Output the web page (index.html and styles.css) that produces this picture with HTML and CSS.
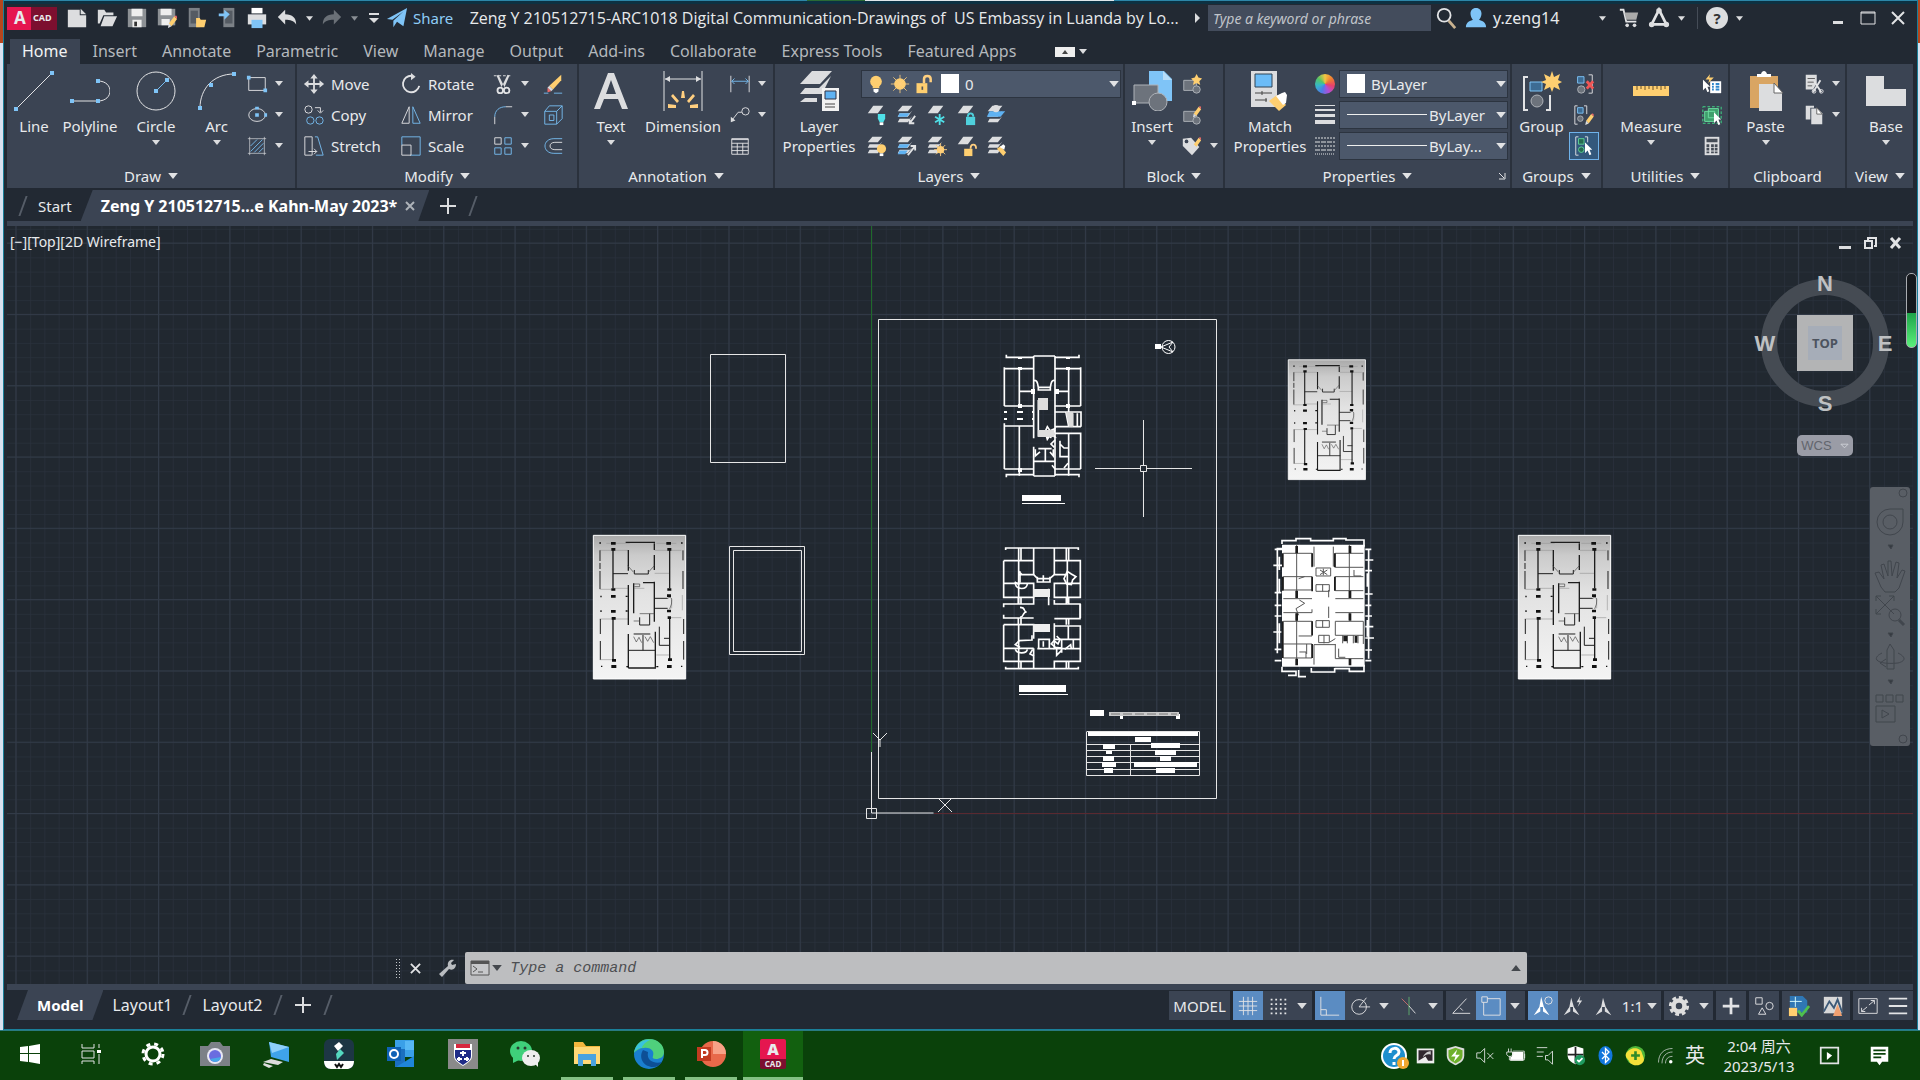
FILE: index.html
```html
<!DOCTYPE html>
<html lang="en">
  <head>
    <meta charset="UTF-8" />
    <meta name="viewport" content="width=device-width, initial-scale=1.0" />
    <title>AutoCAD</title>
    <link rel="stylesheet" href="styles.css">
  </head>
  <body>
    <!-- shared shapes -->
    <svg class="defs" aria-hidden="true">
      <symbol id="caret" viewBox="0 0 8 5"><path d="M0 0h8L4 5z" /></symbol>
      <symbol id="sheets" viewBox="0 0 24 24">
        <path class="solid" d="M8 2h11l-5 6H3zM5 10h11l3-3-5 7H3zM5 16h11l3-3-5 7H3z" />
      </symbol>
      <symbol id="sheet" viewBox="0 0 24 24"><path class="solid" d="M9 2h11l-6 8H3z" /></symbol>
      <symbol id="block" viewBox="0 0 24 24">
        <path class="fade" d="M3 8h14v11H3z" /><circle class="fade" cx="17" cy="18" r="4" />
      </symbol>
      <symbol id="pencil" viewBox="0 0 10 14">
        <path class="amber" d="M7 1l3 3-6 8-3-3z" /><path class="pink" d="M7 1l3 3 0-2-1-2z" /><path class="solid" d="M1 9l3 3-4 2z" />
      </symbol>
      <symbol id="arrowhead" viewBox="0 0 9 14"><path fill="#fff" d="M0 0l8 8H5l2 5-2 1-2-5-3 3z" /></symbol>

      <!-- scanned floor plan -->
      <linearGradient id="scan" x1="0" y1="0" x2="0" y2="1">
        <stop offset="0" stop-color="#a9a9a9" />
        <stop offset=".14" stop-color="#cbcbcb" />
        <stop offset=".4" stop-color="#e2e2e2" />
        <stop offset="1" stop-color="#f4f4f4" />
      </linearGradient>
      <g id="scan-plan">
        <path d="M1 1h277v431H1z" fill="url(#scan)" stroke="#fff" stroke-width="3" />
        <g fill="none" stroke="#9a9a9a" stroke-width="2">
          <path d="M20 46h85M185 46h80M20 163h45M62 160h43M185 115h46M20 252h85M230 248h35M20 374h42M190 360h42M236 190v30M268 180v46M40 25h70M190 25h60M124 160h30" />
        </g>
        <g fill="none" stroke="#1d1d1d" stroke-width="4">
          <path d="M60 45v115M60 252v122M230 45v115M230 252v122M106 45v62M106 150v120M106 297v102M122 145v90M184 25v20M184 60v45M184 140v120M187 290v108" />
          <path d="M98 22h88M150 143h34M106 399h83" />
          <path stroke-width="3" d="M21 46v32M21 84v18M21 108v54M270 46v30M270 108v54M22 252v45M22 318v56M272 252v45M272 318v56" />
          <path stroke-width="3" d="M60 116h45M124 105v12h42v-12M184 190h40M184 220h40M106 346h82M122 297h50M150 300v46M199 275v56h32M231 310h-18M140 247v23h30v-34" />
          <path stroke="#444" stroke-width="2" d="M104 92l18 20M166 112l18-20M224 190q10-8 12 4t-6 28M122 305l8 16 8-14 8 16M156 305l8 14 8-14 10 18M122 147h18v8h-16M122 258h18M140 236h44" />
        </g>
        <g fill="#111">
          <path d="M54 21h14v8H54zM220 21h14v8h-14zM55 39h12v8H55zM223 39h12v8h-12zM55 160h12v7H55zM223 160h12v7h-12zM54 180h14v8H54zM222 178h12v8h-12zM54 225h14v8H54zM222 224h12v8h-12zM56 246h12v8H56zM224 244h10v8h-10zM57 372h12v8H57zM225 370h12v8h-12zM55 390h15v9H55zM222 390h14v9h-14z" />
          <path d="M19 22h5v4h-5zM264 22h5v4h-5zM22 182h4v5h-4zM22 226h4v5h-4zM24 392h4v4h-4zM264 392h4v4h-4zM98 182h6v4h-6zM98 226h6v4h-6zM100 393h6v4h-6zM190 393h6v4h-6z" />
        </g>
      </g>
    </svg>

    <div class="window">
      <header class="titlebar">
        <a class="logo" href="#" aria-label="AutoCAD"><b>A</b><span>CAD</span></a>
        <div class="quick">
          <button type="button" aria-label="New"><svg viewBox="0 0 24 24"><path class="solid" d="M2 3h13v6h7v13H2zM16 2l6 6h-6z" /></svg></button>
          <button type="button" aria-label="Open"><svg viewBox="0 0 24 24"><path class="solid" d="M2 3h7l2 3h8v3H8L4 18H2zM9 10h14l-5 11H5z" /></svg></button>
          <button type="button" aria-label="Save"><svg viewBox="0 0 24 24"><path fill="#8d9195" d="M2 2h20v20H2z" /><path fill="#eee" d="M6 2h12v8H6zM7 14h10v8H7z" /><path fill="#333" d="M9 16h3v5H9z" /></svg></button>
          <button type="button" aria-label="Save As"><svg viewBox="0 0 24 24"><path fill="#8d9195" d="M2 2h19v18H2z" /><path fill="#eee" d="M5 2h12v7H5zM6 13h9v7H6z" /><use href="#pencil" x="13" y="9" width="10" height="14" /></svg></button>
          <button type="button" aria-label="Open from mobile"><svg viewBox="0 0 24 24"><path fill="#7c8187" d="M3 1h12v21H3z" /><path fill="#555b63" d="M5 4h8v14H5z" /><path class="amber" d="M11 12h4l1 2h6l-2 8H11z" /></svg></button>
          <button type="button" aria-label="Save to mobile"><svg viewBox="0 0 24 24"><path fill="#7c8187" d="M8 1h12v21H8z" /><path fill="#555b63" d="M10 4h8v14h-8z" /><path fill="#7fc4f7" d="M3 7h6V3l6 5-6 6v-4H3z" /></svg></button>
          <button type="button" aria-label="Plot"><svg viewBox="0 0 24 24"><path fill="#fff" d="M6 1h12v6H6z" /><path class="solid" d="M2 8h20v11H2z" /><path fill="#7fc4f7" d="M6 14h12v9H6z" /></svg></button>
          <button type="button" aria-label="Undo"><svg viewBox="0 0 24 24"><path class="solid" d="M2 11l8-8v5c8 0 12 4 12 11-3-4-6-5-12-5v5z" /></svg></button>
          <button type="button" class="drop" aria-label="Undo list"><svg><use href="#caret" /></svg></button>
          <button type="button" aria-label="Redo"><svg viewBox="0 0 24 24"><path fill="#6a7077" d="M22 11l-8-8v5C6 8 2 12 2 19c3-4 6-5 12-5v5z" /></svg></button>
          <button type="button" class="drop dim" aria-label="Redo list"><svg><use href="#caret" /></svg></button>
          <button type="button" class="custom" aria-label="Customize"><svg viewBox="0 0 12 12"><path class="solid" d="M1 1h10v2H1zM1 6h10l-5 5z" /></svg></button>
          <button type="button" class="share"><svg viewBox="0 0 24 24"><path fill="#7fc4f7" d="M1 13L23 1l-4 20-7-5-4 6v-7L19 5 7 14z" /></svg>Share</button>
        </div>
        <h1>Zeng Y 210512715-ARC1018 Digital Communication-Drawings of  US Embassy in Luanda by Lo...</h1>
        <div class="account">
          <svg class="play" viewBox="0 0 5 10"><path class="solid" d="M0 0l5 5-5 5z" /></svg>
          <input type="search" placeholder="Type a keyword or phrase" aria-label="Search help" />
          <button type="button" aria-label="Search"><svg viewBox="0 0 24 24"><circle class="line" cx="10" cy="9" r="7" stroke-width="2" /><path d="M15 15l7 8" stroke="#c9b28f" stroke-width="3" /></svg></button>
          <button type="button" class="user"><svg viewBox="0 0 24 24"><path fill="#7fc4f7" d="M12 1c4 0 6 3 6 6s-2 7-3 7c4 1 8 3 8 8H1c0-5 4-7 8-8-1 0-3-4-3-7s2-6 6-6z" /></svg>y.zeng14</button>
          <button type="button" class="drop" aria-label="Account menu"><svg><use href="#caret" /></svg></button>
          <button type="button" aria-label="Cart"><svg viewBox="0 0 24 24"><path class="line" d="M2 3h4l3 13h11" stroke-width="2" /><path fill="#aaa" d="M7 6h15l-2 8H9z" /><circle class="solid" cx="10" cy="20" r="2" /><circle class="solid" cx="18" cy="20" r="2" /></svg></button>
          <button type="button" aria-label="App store"><svg viewBox="0 0 24 24"><path class="line" d="M12 3L4 19h16z" stroke-width="3" /><circle class="solid" cx="12" cy="4" r="3" /><circle class="solid" cx="4" cy="19" r="3" /><circle class="solid" cx="20" cy="19" r="3" /></svg></button>
          <button type="button" class="drop" aria-label="Apps menu"><svg><use href="#caret" /></svg></button>
          <i class="rule"></i>
          <button type="button" class="help" aria-label="Help">?</button>
          <button type="button" class="drop" aria-label="Help menu"><svg><use href="#caret" /></svg></button>
        </div>
        <div class="win-buttons">
          <button type="button" aria-label="Minimize"><svg viewBox="0 0 16 16"><path class="solid" d="M3 11h10v3H3z" /></svg></button>
          <button type="button" aria-label="Maximize"><svg viewBox="0 0 16 16"><path class="line" d="M1 2h14v12H1zM1 3h14" /></svg></button>
          <button type="button" aria-label="Close"><svg viewBox="0 0 16 16"><path class="line" d="M2 2l12 12M14 2L2 14" stroke-width="2" /></svg></button>
        </div>
      </header>

      <nav class="ribbon-tabs">
        <a class="active" href="#">Home</a>
        <a href="#">Insert</a>
        <a href="#">Annotate</a>
        <a href="#">Parametric</a>
        <a href="#">View</a>
        <a href="#">Manage</a>
        <a href="#">Output</a>
        <a href="#">Add-ins</a>
        <a href="#">Collaborate</a>
        <a href="#">Express Tools</a>
        <a href="#">Featured Apps</a>
        <button type="button" class="collapse" aria-label="Minimize ribbon"><svg viewBox="0 0 20 10"><path fill="#eee" d="M0 0h20v10H0z" /><path fill="#444" d="M7 7h6l-3-4z" /></svg></button>
        <button type="button" class="drop" aria-label="Ribbon options"><svg><use href="#caret" /></svg></button>
      </nav>

      <section class="ribbon">
        <div class="panel draw">
          <div class="panel-body">
            <button type="button" class="big"><svg viewBox="0 0 40 40"><path class="line" d="M2 38L38 2" /><path class="grip" d="M0 36h4v4H0zM36 0h4v4h-4z" /></svg>Line</button>
            <button type="button" class="big"><svg viewBox="0 0 40 40"><path class="line" d="M2 30h26c16 0 16-20 0-20" /><path class="grip" d="M0 28h4v4H0zM26 28h4v4h-4zM26 8h4v4h-4z" /></svg>Polyline</button>
            <button type="button" class="big"><svg viewBox="0 0 40 40"><circle class="line" cx="20" cy="20" r="19" /><path class="blue" d="M20 20L31 9" /><path class="grip" d="M18 18h4v4h-4zM29 7h4v4h-4z" /></svg>Circle<svg class="mini"><use href="#caret" /></svg></button>
            <button type="button" class="big"><svg viewBox="0 0 40 40"><path class="line" d="M3 37C3 18 16 3 37 3" /><path class="grip" d="M1 35h4v4H1zM12 12h4v4h-4zM35 1h4v4h-4z" /></svg>Arc<svg class="mini"><use href="#caret" /></svg></button>
            <div class="stack">
              <div class="row"><button type="button" class="small" aria-label="Rectangle"><svg viewBox="0 0 24 24"><path class="line" d="M3 5h18v14H3z" /><path class="grip" d="M1 3h4v4H1zM19 17h4v4h-4z" /></svg></button><button type="button" class="drop" aria-label="More"><svg><use href="#caret" /></svg></button></div>
              <div class="row"><button type="button" class="small" aria-label="Ellipse"><svg viewBox="0 0 24 24"><ellipse class="line" cx="12" cy="12" rx="9" ry="7" /><path class="grip" d="M10 10h4v4h-4zM10 3h4v3h-4zM20 10h3v4h-3z" /></svg></button><button type="button" class="drop" aria-label="More"><svg><use href="#caret" /></svg></button></div>
              <div class="row"><button type="button" class="small" aria-label="Hatch"><svg viewBox="0 0 24 24"><path class="line" d="M2 4h20M2 20h20M4 2v20M20 2v20" stroke-opacity=".7" /><path class="blue" d="M5 12l7-7M5 18L18 5M9 19L19 9M14 19l5-5" /></svg></button><button type="button" class="drop" aria-label="More"><svg><use href="#caret" /></svg></button></div>
            </div>
          </div>
          <button type="button" class="panel-title">Draw<svg><use href="#caret" /></svg></button>
        </div>

        <div class="panel modify">
          <div class="panel-body">
            <div class="stack">
              <button type="button" class="row"><svg viewBox="0 0 24 24"><path class="solid" d="M12 1l4 5h-3v5h5V8l5 4-5 4v-3h-5v5h3l-4 5-4-5h3v-5H6v3l-5-4 5-4v3h5V6H8z" /></svg>Move</button>
              <button type="button" class="row"><svg viewBox="0 0 24 24"><circle class="line" cx="6" cy="6" r="4" /><path class="line" d="M13 4h6v5M16 7l3 3 3-3" /><circle class="blue" cx="8" cy="18" r="4" /><circle class="blue" cx="18" cy="18" r="4" /></svg>Copy</button>
              <button type="button" class="row"><svg viewBox="0 0 24 24"><path class="line" d="M2 2h8v20H2zM6 18h9M12 15l3 3-3 3" /><path class="blue" d="M13 2h3l6 20h-8" /></svg>Stretch</button>
            </div>
            <div class="stack">
              <button type="button" class="row"><svg viewBox="0 0 24 24"><path class="line" d="M13 3a9 9 0 1 0 8 11" stroke-width="2" /><path class="solid" d="M12 0l5 4-5 4z" /></svg>Rotate</button>
              <button type="button" class="row"><svg viewBox="0 0 24 24"><path class="line" d="M10 3v18H2z" /><path class="blue" d="M14 3v18h8z" /></svg>Mirror</button>
              <button type="button" class="row"><svg viewBox="0 0 24 24"><path class="blue" d="M2 11V2h20v20H11" /><path class="line" d="M2 11h10v11H2z" /></svg>Scale</button>
            </div>
            <div class="stack">
              <div class="row"><button type="button" class="small" aria-label="Trim"><svg viewBox="0 0 24 24"><path class="line" d="M2 3h20" stroke-dasharray="3 2" /><path class="solid" d="M5 3l2-1 7 14-3 1zM19 3l-2-1-7 14 3 1z" /><circle class="line" cx="9" cy="19" r="3" stroke-width="2" /><circle class="line" cx="16" cy="19" r="3" stroke-width="2" /></svg></button><button type="button" class="drop" aria-label="More"><svg><use href="#caret" /></svg></button></div>
              <div class="row"><button type="button" class="small" aria-label="Fillet"><svg viewBox="0 0 24 24"><path class="blue" d="M3 14C3 7 8 3 15 3" /><path class="line" d="M3 14v8M15 3h7" /></svg></button><button type="button" class="drop" aria-label="More"><svg><use href="#caret" /></svg></button></div>
              <div class="row"><button type="button" class="small" aria-label="Array"><svg viewBox="0 0 24 24"><path class="line" d="M3 3h7v7H3z" /><path class="blue" d="M14 3h7v7h-7zM3 14h7v7H3zM14 14h7v7h-7z" /></svg></button><button type="button" class="drop" aria-label="More"><svg><use href="#caret" /></svg></button></div>
            </div>
            <div class="stack">
              <div class="row"><button type="button" class="small" aria-label="Erase"><svg viewBox="0 0 24 24"><path class="amber" d="M21 2v6L12 18l-4-4z" /><path class="solid" d="M8 14l4 4-2 2-4-4z" /><path class="pink" d="M6 16l4 4-4 1z" /><path class="blue" d="M2 22h5M13 22h9" /></svg></button></div>
              <div class="row"><button type="button" class="small" aria-label="Explode"><svg viewBox="0 0 24 24"><path class="blue" d="M3 8h13v14H3zM3 8l5-6h14v14l-6 6M16 8l6-6M8 12h5v6H8z" /></svg></button></div>
              <div class="row"><button type="button" class="small" aria-label="Offset"><svg viewBox="0 0 24 24"><path class="blue" d="M22 4h-9c-13 0-13 16 0 16h9" /><path class="line" d="M22 8h-8c-7 0-7 8 0 8h8" /></svg></button></div>
            </div>
          </div>
          <button type="button" class="panel-title">Modify<svg><use href="#caret" /></svg></button>
        </div>

        <div class="panel annotation">
          <div class="panel-body">
            <button type="button" class="big"><svg viewBox="0 0 40 40"><path class="solid" d="M17 2h6l14 36h-6l-4-10H13L9 38H3zM15 23h10L20 9z" fill-rule="evenodd" /></svg>Text<svg class="mini"><use href="#caret" /></svg></button>
            <button type="button" class="big"><svg viewBox="0 0 40 40"><path class="line" d="M1 0v40M39 0v40M2 8h36" /><path class="solid" d="M2 8l5-3v6zM38 8l-5-3v6z" /><path fill="#ffcf80" d="M19 20h2l1 7h-4zM10 23l6 7-2 2-6-7zM30 23l-6 7 2 2 6-7zM5 33l8 1v3H5zM35 33l-8 1v3h8z" /></svg>Dimension</button>
            <div class="stack">
              <div class="row"><button type="button" class="small" aria-label="Linear"><svg viewBox="0 0 24 24"><path class="line" d="M2 3v18M22 3v18" /><path class="blue" d="M3 9h18M6 6L3 9l3 3M18 6l3 3-3 3" /></svg></button><button type="button" class="drop" aria-label="More"><svg><use href="#caret" /></svg></button></div>
              <div class="row"><button type="button" class="small" aria-label="Leader"><svg viewBox="0 0 24 24"><path class="line" d="M3 18l7-9h4" /><circle class="line" cx="18" cy="8" r="4" /><path class="solid" d="M2 20v-6l5 4z" /></svg></button><button type="button" class="drop" aria-label="More"><svg><use href="#caret" /></svg></button></div>
              <div class="row"><button type="button" class="small" aria-label="Table"><svg viewBox="0 0 24 24"><path class="line" d="M3 4h18v17H3zM3 5h18M3 9h18M3 13h18M3 17h18M9 9v12M15 9v12" /></svg></button></div>
            </div>
          </div>
          <button type="button" class="panel-title">Annotation<svg><use href="#caret" /></svg></button>
        </div>

        <div class="panel layers">
          <div class="panel-body">
            <button type="button" class="big"><svg viewBox="0 0 40 40"><path class="solid" d="M13 0h20L21 13H1zM6 17h14l12-12-9 18H1zM6 27h12v4H1z" /><path fill="#f2f2f2" d="M23 17h17v23H23z" /><path fill="#5fb2f2" stroke="#334" d="M26 20h11v8H26z" /><path stroke="#444" d="M26 33h10M26 36h10" /></svg>Layer<br />Properties</button>
            <div class="stack">
              <div class="row"><label class="combo"><svg viewBox="0 0 24 24"><circle class="amber" cx="12" cy="9" r="7" /><path class="amber" d="M8 13h8v4H8z" /><path fill="#fff" d="M9 18h6v3l-3 2-3-2z" /></svg><svg viewBox="0 0 24 24"><circle class="amber" cx="12" cy="12" r="7" /><path stroke="#ffcf80" d="M12 1v22M1 12h22M4 4l16 16M20 4L4 20" /></svg><svg viewBox="0 0 24 24"><path class="amber" d="M3 11h13v12H3z" /><path d="M12 11V6c0-5 8-5 8 0v4" fill="none" stroke="#ffcf80" stroke-width="3" /><path fill="#555" d="M9 15h2v4H9z" /></svg><i class="swatch"></i><select aria-label="Layer"><option>0</option></select><svg class="caret"><use href="#caret" /></svg></label></div>
              <div class="row">
                <button type="button" class="small" aria-label="Layer off"><svg viewBox="0 0 24 24"><use href="#sheet" /><path fill="#4fe0e8" d="M14 11h8v5l-2 4h-4l-2-4z" /><path fill="#fff" d="M16 20h4v3h-4z" /></svg></button>
                <button type="button" class="small" aria-label="Layer isolate"><svg viewBox="0 0 24 24"><use href="#sheets" /><path fill="#5fb2f2" d="M5 10h11l-3 4H3z" /><path class="line" d="M22 13l-6 8M16 17v4h5" stroke-width="2" /></svg></button>
                <button type="button" class="small" aria-label="Layer freeze"><svg viewBox="0 0 24 24"><use href="#sheet" /><path d="M16 11v12M11 14l10 6M21 14l-10 6" stroke="#4fe0e8" stroke-width="2" /></svg></button>
                <button type="button" class="small" aria-label="Layer lock"><svg viewBox="0 0 24 24"><use href="#sheet" /><path fill="#4fd0dc" d="M12 14h10v9H12z" /><path d="M14 14c0-5 6-5 6 0" fill="none" stroke="#4fd0dc" stroke-width="2" /></svg></button>
                <button type="button" class="small" aria-label="Make current"><svg viewBox="0 0 24 24"><use href="#sheets" /><path fill="#5fb2f2" d="M5 8h17l-5 6H2z" /><circle class="solid" cx="12" cy="5" r="4" /></svg></button>
              </div>
              <div class="row">
                <button type="button" class="small" aria-label="Turn all on"><svg viewBox="0 0 24 24"><use href="#sheets" /><circle class="amber" cx="18" cy="15" r="5" /><path fill="#fff" d="M16 20h4v3h-4z" /></svg></button>
                <button type="button" class="small" aria-label="Unisolate"><svg viewBox="0 0 24 24"><use href="#sheets" /><path fill="#5fb2f2" d="M5 10h11l-3 4H3zM5 17h9l-3 4H3z" /><path class="line" d="M14 22l8-10M17 12h5v5" stroke-width="2" /></svg></button>
                <button type="button" class="small" aria-label="Thaw all"><svg viewBox="0 0 24 24"><use href="#sheets" /><circle class="amber" cx="17" cy="16" r="4" /><path stroke="#ffcf80" d="M17 9v14M10 16h14M12 11l10 10M22 11L12 21" /></svg></button>
                <button type="button" class="small" aria-label="Unlock"><svg viewBox="0 0 24 24"><use href="#sheet" /><path class="amber" d="M10 15h9v8h-9z" /><path d="M17 15c0-6 6-6 6 0" fill="none" stroke="#ffcf80" stroke-width="2" /></svg></button>
                <button type="button" class="small" aria-label="Match layer"><svg viewBox="0 0 24 24"><use href="#sheets" /><path class="amber" d="M13 15l4-3 6 7-3 4z" /><path fill="#fff" d="M16 13l4-3 2 2-1 4z" /></svg></button>
              </div>
            </div>
          </div>
          <button type="button" class="panel-title">Layers<svg><use href="#caret" /></svg></button>
        </div>

        <div class="panel insert">
          <div class="panel-body">
            <button type="button" class="big"><svg viewBox="0 0 40 40"><path fill="#7fc4f7" d="M17 0h15l8 8v22H17z" /><path fill="#b8defa" d="M31 0v9h9z" /><path class="fade" d="M2 14h24v18H2z" /><circle class="fade" cx="26" cy="31" r="9" /><path fill="#fff" d="M0 30h4v4H0z" /></svg>Insert<svg class="mini"><use href="#caret" /></svg></button>
            <div class="stack">
              <div class="row"><button type="button" class="small" aria-label="Create block"><svg viewBox="0 0 24 24"><use href="#block" /><path class="amber" d="M17 1l2 4 4 1-3 3 1 4-4-2-4 2 1-4-3-3 4-1z" /></svg></button></div>
              <div class="row"><button type="button" class="small" aria-label="Edit block"><svg viewBox="0 0 24 24"><use href="#block" /><use href="#pencil" x="13" y="2" width="9" height="13" /></svg></button></div>
              <div class="row"><button type="button" class="small" aria-label="Edit attributes"><svg viewBox="0 0 24 24"><path class="solid" d="M2 4l9-1 9 10-8 9L2 12z" /><circle fill="#3b4453" cx="6" cy="7" r="2" /><use href="#pencil" x="13" y="2" width="9" height="13" /></svg></button><button type="button" class="drop" aria-label="More"><svg><use href="#caret" /></svg></button></div>
            </div>
          </div>
          <button type="button" class="panel-title">Block<svg><use href="#caret" /></svg></button>
        </div>

        <div class="panel properties">
          <div class="panel-body">
            <button type="button" class="big"><svg viewBox="0 0 40 40"><path class="solid" d="M1 0h26v36H1z" /><path fill="#6bbcf7" stroke="#345" d="M5 3h17v13H5z" /><path stroke="#444" d="M5 22h17M5 29h12M12 20v4M16 27v4" /><path class="amber" d="M19 30l8-6 9 10-7 6z" /><path fill="#fff" d="M26 25l6-3 3-1 2 3-1 8-3 2z" /></svg>Match<br />Properties</button>
            <div class="stack">
              <div class="row"><i class="wheel"></i><label class="combo"><i class="swatch"></i><select aria-label="Color"><option>ByLayer</option></select><svg class="caret"><use href="#caret" /></svg></label></div>
              <div class="row"><svg class="weights" viewBox="0 0 20 20"><path class="solid" d="M0 0h20v1H0zM0 4h20v2H0zM0 9h20v3H0zM0 15h20v4H0z" /></svg><label class="combo"><i class="sample"></i><select aria-label="Lineweight"><option>ByLayer</option></select><svg class="caret"><use href="#caret" /></svg></label></div>
              <div class="row"><svg class="weights" viewBox="0 0 20 20"><path class="line" d="M0 2h20M0 10h20" stroke-dasharray="2 1" /><path class="line" d="M0 6h20M0 14h20" stroke-dasharray="5 1" /><path class="line" d="M0 18h20" stroke-dasharray="1 1" /></svg><label class="combo"><i class="sample"></i><select aria-label="Linetype"><option>ByLay...</option></select><svg class="caret"><use href="#caret" /></svg></label></div>
            </div>
          </div>
          <button type="button" class="panel-title">Properties<svg><use href="#caret" /></svg></button>
          <button type="button" class="launcher" aria-label="Properties palette"><svg viewBox="0 0 8 8"><path class="line" d="M1 1l5 5M7 1v6H1" /></svg></button>
        </div>

        <div class="panel groups">
          <div class="panel-body">
            <button type="button" class="big"><svg viewBox="0 0 40 40"><path class="line" d="M6 6H2v33h4M24 39h4V24" stroke-width="2" /><path fill="#3d6c94" stroke="#7fc4f7" d="M8 11h12v9H8z" /><circle class="fade" cx="15" cy="30" r="6" /><path class="amber" d="M30 0l2 6 6-3-2 6 4 2-4 2 2 6-6-3-2 5-2-5-6 3 2-6-5-2 5-2-2-6 6 3z" /></svg>Group</button>
            <div class="stack">
              <div class="row"><button type="button" class="small" aria-label="Ungroup"><svg viewBox="0 0 24 24"><path class="line" d="M17 2h4v20h-4" /><path fill="#3d6c94" stroke="#7fc4f7" d="M5 4h7v7H5z" /><circle class="fade" cx="9" cy="18" r="4" /><path d="M15 9l7 8M22 9l-7 8" stroke="#f05656" stroke-width="3" /></svg></button></div>
              <div class="row"><button type="button" class="small" aria-label="Group edit"><svg viewBox="0 0 24 24"><path class="line" d="M5 2H2v20h3M12 2h3v9" /><path fill="#3d6c94" stroke="#7fc4f7" d="M5 4h6v6H5z" /><circle class="fade" cx="8" cy="16" r="3" /><use href="#pencil" x="13" y="10" width="10" height="13" /></svg></button></div>
              <div class="row"><button type="button" class="small on" aria-label="Group selection"><svg viewBox="0 0 24 24"><path class="line" d="M6 2H3v20h3M13 2h3v6" /><path fill="#276a50" stroke="#5fd39a" d="M6 4h6v6H6z" /><circle cx="9" cy="16" r="3" fill="#276a50" stroke="#5fd39a" /><use href="#arrowhead" x="13" y="8" width="9" height="14" /></svg></button></div>
            </div>
          </div>
          <button type="button" class="panel-title">Groups<svg><use href="#caret" /></svg></button>
        </div>

        <div class="panel utilities">
          <div class="panel-body">
            <button type="button" class="big"><svg viewBox="0 0 40 40"><path class="amber" d="M2 15h36v10H2z" /><path stroke="#6b5328" d="M6 15v4M10 15v3M14 15v4M18 15v3M22 15v4M26 15v3M30 15v4M34 15v3" /></svg>Measure<svg class="mini"><use href="#caret" /></svg></button>
            <div class="stack">
              <div class="row"><button type="button" class="small" aria-label="Quick select"><svg viewBox="0 0 24 24"><path fill="#fff" d="M10 9h12v13H10z" /><path stroke="#2f86cc" d="M12 12h2M16 12h4M12 15h2M16 15h4M12 18h2M16 18h4" stroke-width="2" /><path class="amber" d="M10 1l-5 6h4l-1 4 6-6H9z" /><use href="#arrowhead" x="2" y="7" width="9" height="14" /></svg></button></div>
              <div class="row"><button type="button" class="small" aria-label="Select all"><svg viewBox="0 0 24 24"><path d="M2 3h20v18H2z" fill="none" stroke="#3fe08a" stroke-dasharray="3 2" /><path fill="#3f9f6c" stroke="#6fe0a4" d="M4 8h11v11H4zM8 5h11v10H8z" /><use href="#arrowhead" x="14" y="9" width="9" height="14" /></svg></button></div>
              <div class="row"><button type="button" class="small" aria-label="Calculator"><svg viewBox="0 0 24 24"><path class="solid" d="M4 2h16v20H4z" /><path fill="#454c56" d="M6 4h12v4H6zM6 10h3v3H6zM11 10h3v3h-3zM15 10h3v3h-3zM6 14h3v3H6zM11 14h3v3h-3zM15 14h3v3h-3zM6 18h3v2H6zM11 18h3v2h-3zM15 18h3v2h-3z" /></svg></button></div>
            </div>
          </div>
          <button type="button" class="panel-title">Utilities<svg><use href="#caret" /></svg></button>
        </div>

        <div class="panel clipboard">
          <div class="panel-body">
            <button type="button" class="big"><svg viewBox="0 0 40 40"><path fill="#d9a563" d="M4 5h28v32H4z" /><path fill="#fff" d="M11 6V3h4c1-4 5-4 6 0h4v3z" /><path class="solid" d="M13 13h15l8 8v19H13z" /><path fill="#fff" stroke="#666" d="M28 12v10h9z" /></svg>Paste<svg class="mini"><use href="#caret" /></svg></button>
            <div class="stack">
              <div class="row"><button type="button" class="small" aria-label="Cut"><svg viewBox="0 0 24 24"><path class="solid" d="M3 2h12v9l-4 7H3z" /><path stroke="#555" d="M5 6h8M5 10h7M5 14h5" /><path class="line" d="M19 8l-8 13M12 9l8 12" stroke-width="2" /><circle class="line" cx="12" cy="20" r="2" /><circle class="line" cx="20" cy="20" r="2" /></svg></button><button type="button" class="drop" aria-label="More"><svg><use href="#caret" /></svg></button></div>
              <div class="row"><button type="button" class="small" aria-label="Copy clip"><svg viewBox="0 0 24 24"><path class="solid" d="M3 2h9v2H8v13H3z" /><path class="solid" d="M9 5h7l5 5v12H9z" /><path fill="#fff" stroke="#666" d="M15 4v7h6z" /></svg></button><button type="button" class="drop" aria-label="More"><svg><use href="#caret" /></svg></button></div>
            </div>
          </div>
          <button type="button" class="panel-title">Clipboard</button>
        </div>

        <div class="panel view">
          <div class="panel-body">
            <button type="button" class="big"><svg viewBox="0 0 40 40"><path class="solid" d="M0 5h18v13h22v17H0z" /></svg>Base<svg class="mini"><use href="#caret" /></svg></button>
          </div>
          <button type="button" class="panel-title">View<svg><use href="#caret" /></svg></button>
        </div>
      </section>

      <nav class="file-tabs">
        <i class="slash"></i>
        <a href="#">Start</a>
        <a class="active" href="#">Zeng Y 210512715...e Kahn-May 2023*<svg viewBox="0 0 10 10"><path d="M1 1l8 8M9 1L1 9" stroke="#aeb3b9" stroke-width="2" /></svg></a>
        <button type="button" class="plus" aria-label="New drawing"></button>
        <i class="slash"></i>
      </nav>

      <main class="model">
        <svg class="drawing" viewBox="7 226 1906 758" preserveAspectRatio="xMidYMid slice" role="img" aria-label="Drawing">
          <defs>
            <pattern id="minor" x="871.5" y="813.5" width="14.26" height="14.26" patternUnits="userSpaceOnUse"><path d="M0 0h14.26M0 0v14.26" stroke="#29313c" stroke-width="1.4" /></pattern>
            <pattern id="major" x="871" y="813" width="71.3" height="71.3" patternUnits="userSpaceOnUse"><path d="M.5 0v71.3M0 .5h71.3" stroke="#323b48" /></pattern>
          </defs>
          <path fill="url(#minor)" d="M7 226h1906v758H7z" />
          <path fill="url(#major)" d="M7 226h1906v758H7z" />
          <path stroke="#1f6a2b" d="M871.500 226v526" />
          <path stroke="#5a2930" d="M934 813.500h979" />

          <g fill="none" stroke="#e6e6e6">
            <path d="M878.500 319.500h338v479h-338z" />
            <path d="M710.500 354.500h75v108h-75zM729.500 546.500h75v108h-75zM733.500 550.500h68v101h-68z" />
            <path d="M871.500 752v61h62M866.500 808.500h10v10h-10z" />
            <path d="M873 733l7 7 7-7M880 740v7M938 798l14 14M952 798l-14 14" />
            <path d="M1143.500 420v45M1143.500 472v45M1095 468.500h45M1147 468.500h45M1140.500 465.500h6v6h-6z" />
          </g>

          <!-- north mark -->
          <path fill="#fff" d="M1155 344h6v5h-6z" />
          <g fill="none" stroke="#fff">
            <circle cx="1168.500" cy="347" r="6.500" />
            <path d="M1161 347l12-5-4 5 4 5z" />
          </g>

          <!-- ground floor -->
          <g transform="translate(960 320) scale(.3333)" fill="none" stroke="#fff" stroke-width="5">
            <path d="M139 104v8h82M221 108h64M285 112h72v-8M139 472v-8h82M221 468h64M285 464h72v8" />
            <path d="M221 108v247M285 108v360M221 380v88M133 142v116M178 146v112M133 146h88M133 258h88M178 214h43M133 318h88M133 310v137M178 318v129M133 447h88M178 447v20" />
            <path d="M285 146h77M362 142v116M326 146v112M285 258h77M285 214h41M326 258v18M285 276h78v44M285 320h78M318 278l8 40M338 280v38M352 280v38M285 340h77v107M326 340v107M285 447h77M326 447v20" />
            <path d="M221 182c8-4 12 4 14 20v8h36v-8c2-16 6-24 14-20M235 202h36M235 240v110M221 424h64M235 386h40M256 386v38M300 362v48h24M300 372l12 12h12" />
            <path d="M226 388v20l14-12M270 396l10 12v-20M285 360l-12 12 10 10M324 430l-12 14M276 436l10 12M262 320l8 12 14-6-8 14 8 10-14-4-8 12-4-14-14-2 12-8zM285 330l-14 24" />
          </g>
          <path fill="#fff" d="M1004 411h3v2h-3zM1004 418h3v2h-3zM1017 411h6v2h-6zM1017 418h6v2h-6zM1032 411h2v2h-2zM1032 418h2v2h-2zM1031 389h4v5h-4zM1055 389h4v5h-4zM1018 357h4v2h-4zM1066 357h4v2h-4zM1018 367h4v3h-4zM1066 367h4v3h-4zM1018 404h4v4h-4zM1066 404h4v4h-4zM1018 468h4v4h-4z" />
          <path fill="#ddd" d="M1038 398h10v12h-10zM1038 430h16v7h-16zM1066 412h7v15h-4z" />
          <path fill="#fff" d="M1022 495h39v6h-39zM1022 503h43v1h-43z" />

          <!-- first floor -->
          <g transform="translate(960 520) scale(.3333)" fill="none" stroke="#fff" stroke-width="5">
            <path d="M137 90v-6h218v6M137 440v6h218v-6M131 122h90M131 122v110h90v-42h-90M176 84v38M183 84v38M176 122v130M221 84v80M283 84v80M319 84v38M326 84v38M322 122v128M283 122h78v110h-78v-42h78" />
            <path d="M131 262v-10h90v-20M131 284v10h90M283 240v12h77v44h-77M361 252v42M175 232v20M183 232v20M319 232v20M326 232v20M175 294v20M183 294v20M319 294v20M326 294v20" />
            <path d="M131 314h90v42M131 314v110h90v20M176 314v110M131 385h90M221 385v60M283 310v76h78M283 318h78v106h-78v22M283 358h78M305 358v40M325 318v40M340 358v28M176 424v22M183 424v22M319 424v22M326 424v22" />
            <path d="M176 164h45l12 12h36l14-12h38M232 170v16h38v-16M250 166v20M266 206v50M232 386h51M236 384v-26h32v26M250 364v16M180 154v34M164 186l14 8M166 192c4 18 34 18 36 0M186 164l-10-10M322 154l12 8 14 8-10 10-4 14-14-2-8-16zM180 262c20 0 8 14 20 14-14 0-6 14-20 16M216 346v14l-38 2-12 12 14 8M166 388c4 14 34 14 36 0M218 388l-8 14 12 6M290 348l10 10-6 14-12-10-8 10 12 10 20 2M290 386v20l14-14M314 388l18-14 2 12" />
          </g>
          <path fill="#eee" d="M1033 589h17v8h-17zM1033 624h17v8h-17z" />
          <path fill="#fff" d="M1019 685h47v7h-47zM1019 694h49v1h-49z" />

          <!-- scale bar and title block -->
          <path fill="#fff" d="M1090 710h14v6h-14zM1120 714h3v5h-3zM1176 714h4v5h-4z" />
          <path d="M1109 714h70" stroke="#c9c9c9" stroke-width="4" />
          <path d="M1111 714h66" stroke="#777" stroke-dasharray="9 3" />
          <path fill="none" stroke="#e6e6e6" d="M1087 731.500h112.500v44h-113v-44M1087 744.500h112M1087 750.500h112M1087 756.500h112M1087 762.500h112M1087 769.500h112M1130.500 744v31" />
          <path fill="#fff" d="M1088 732h110v4h-110zM1135 737h16v5h-16zM1103 744h12v5h-12zM1106 751h6v3h-6zM1103 756h11v5h-11zM1102 762h14v5h-14zM1104 768h9v5h-9zM1151 743h29v5h-29zM1155 750h21v5h-21zM1160 756h11v5h-11zM1134 762h63v5h-63zM1156 768h19v5h-19z" />

          <!-- traced plan with dimensions -->
          <g transform="translate(1260 340) scale(.3333)">
            <path fill="#fff" d="M66 614h248v366H66z" />
            <path fill="none" stroke="#fff" stroke-width="5" d="M66 612v-10h42v-6h44v6l20 0h48v-6h38v4h54v20M52 650v-24h14M66 980v14h42v12h-24M154 984v12h70v-12M224 986h44v8h44v-20M52 650v290M326 626v330M40 876h24M40 676h26M44 628h22M44 758h20M44 796h20M44 828h20M44 928h20M44 962h20M316 628h18M316 660h24M316 692h20M316 762h22M316 796h18M316 828h20M316 860h24M316 894h26M316 930h20M316 962h18M58 650v40M58 716v40M58 850v60M322 700v40M322 840v50M116 990v20h22" />
            <g fill="none" stroke="#555" stroke-width="3">
              <path d="M70 640h86v42M156 710H70v40h86v-40M110 615v160M70 776h86M70 818h86v-10M110 820v155M70 844h86v44h-40M70 912h86v42H70M226 640h84M226 640v42h84M226 710h84M226 710v42h84M268 615v160M226 776h84M226 818h84M268 820v20M226 844h84v68M226 844v42h84M226 912v44h84M162 620v60M220 620v60M168 684h44v24h-44zM168 734h40v20h-40zM168 842h40v20h-40zM176 886h32v22h-32zM162 914h64M162 914v60M206 750v22M206 800v34M190 686v20M180 690l22 14M202 690l-22 14M188 734v20M188 842v20M192 886v24" />
              <path d="M116 716l18-6M116 826l-8-20 26-16-16-10M282 690v18h22M140 912v30M248 886v24M262 886v24M280 886v24M294 886v24M236 926v26h20M118 936h20v18M226 896l-16 10" />
            </g>
            <path fill="#1c1c1c" d="M106 618h8v22h-8zM266 618h8v22h-8zM106 752h8v22h-8zM266 752h8v22h-8zM106 820h8v22h-8zM266 820h8v22h-8zM106 956h8v20h-8zM266 956h8v20h-8zM222 640h5v42h-5zM222 710h5v42h-5zM154 640h5v40h-5zM154 710h5v44h-5zM250 888h12v16h-12zM284 888h8v20h-8zM154 844h5v42h-5zM154 912h5v42h-5zM66 640h5v42h-5zM66 710h5v42h-5zM66 844h5v110h-5z" />
          </g>

          <use href="#scan-plan" transform="translate(593 535) scale(.3333)" />
          <use href="#scan-plan" transform="translate(1518 535) scale(.3333)" />
          <use href="#scan-plan" transform="translate(1288 359.500) scale(.2785 .278)" />
        </svg>

        <p class="view-label">[−][Top][2D Wireframe]</p>
        <div class="view-buttons">
          <button type="button" aria-label="Minimize view"><svg viewBox="0 0 14 14"><path class="solid" d="M1 10h12v3H1z" /></svg></button>
          <button type="button" aria-label="Restore view"><svg viewBox="0 0 14 14"><path class="line" d="M5 4V2h8v8h-2M2 5h7v7H2z" stroke-width="2" /></svg></button>
          <button type="button" aria-label="Close view"><svg viewBox="0 0 14 14"><path class="line" d="M3 2l9 10M12 2L3 12" stroke-width="3" /></svg></button>
        </div>

        <div class="compass">
          <span class="n">N</span><span class="w">W</span><button type="button">TOP</button><span class="e">E</span><span class="s">S</span>
        </div>
        <button type="button" class="wcs">WCS<svg viewBox="0 0 10 6"><path d="M1 1h8L5 5z" fill="none" stroke="#d0d2d8" /></svg></button>
        <i class="meter"></i>

        <div class="navbar">
          <svg viewBox="0 0 40 259">
            <circle cx="33" cy="6" r="4" /><circle cx="33" cy="252" r="4" />
            <circle cx="20" cy="35" r="7" /><path d="M33 35a13 13 0 1 1-13-13h13z" />
            <path d="M11 100l-6-14 4-1 5 7-3-14 3-1 4 12V74h3l1 15 4-14 3 1-2 15 5-8 3 1-6 17-4 4H15z" />
            <path d="M6 109l18 18M24 109L6 127M6 114v-5h5M19 109h5v5M6 122v5h5" /><circle cx="25" cy="128" r="6" /><path d="M29 133l5 5" stroke-width="3" />
            <path d="M17 182v-19l3-6 4 6v19z" /><path d="M12 166C0 172 8 178 28 176c8-2 8-6 0-10M10 176l6-4M10 176l6 4" />
            <path d="M6 208h7v7H6zM16 208h7v7h-7zM26 208h7v7h-7zM6 219h19v16H6zM12 223v8l7-4z" />
            <path class="tip" d="M18 58h5l-2 4zM18 146h5l-2 4zM18 193h5l-2 4z" />
          </svg>
        </div>

        <form class="command">
          <i class="grip-dots"></i>
          <button type="button" aria-label="Close command line"><svg viewBox="0 0 12 12"><path class="line" d="M1 1l10 10M11 1L1 11" stroke-width="2" /></svg></button>
          <button type="button" class="wrench" aria-label="Customize"><svg viewBox="0 0 20 20"><path fill="#b9bcc0" d="M2 16L11 8c-1-4 2-7 6-6l-3 3 1 2 4-1c0 4-3 7-7 5L5 19z" /></svg></button>
          <label class="command-box">
            <svg viewBox="0 0 20 16"><path fill="#c7c8ca" stroke="#555" d="M1 1h18v14H1z" /><path fill="#555" d="M1 1h18v3H1z" /><path fill="none" stroke="#555" d="M3 6l4 3-4 3M8 12h5" /></svg>
            <svg class="caret"><use href="#caret" /></svg>
            <input type="text" placeholder="Type a command" aria-label="Command" />
            <svg class="caret up"><use href="#caret" /></svg>
          </label>
        </form>
      </main>

      <footer class="statusbar">
        <nav class="layout-tabs">
          <a class="active" href="#">Model</a>
          <a href="#">Layout1</a>
          <i class="slash"></i>
          <a href="#">Layout2</a>
          <i class="slash"></i>
          <button type="button" class="plus" aria-label="New layout"></button>
          <i class="slash"></i>
        </nav>
        <div class="status">
          <div class="set"><button type="button" class="text">MODEL</button></div>
          <div class="set">
            <button type="button" class="on" aria-label="Grid"><svg viewBox="0 0 24 24"><path class="line" d="M7 2v20M12 2v20M17 2v20M2 7h20M2 12h20M2 17h20" /></svg></button>
            <button type="button" aria-label="Snap"><svg viewBox="0 0 24 24"><path class="line" d="M4 5h17M4 10h17M4 15h17M4 20h17" stroke-width="2" stroke-dasharray="2 3" /></svg></button>
            <button type="button" class="drop" aria-label="Snap menu"><svg><use href="#caret" /></svg></button>
          </div>
          <div class="set">
            <button type="button" class="on" aria-label="Ortho"><svg viewBox="0 0 24 24"><path class="line" d="M2 2v20h20M2 16h6v6" /></svg></button>
            <button type="button" aria-label="Polar"><svg viewBox="0 0 24 24"><circle class="line" cx="11" cy="13" r="8" /><path class="line" d="M11 13h12M11 13l8-10" /></svg></button>
            <button type="button" class="drop" aria-label="Polar menu"><svg><use href="#caret" /></svg></button>
            <button type="button" aria-label="Isodraft"><svg viewBox="0 0 24 24"><path stroke="#c96f6f" d="M4 4l8 8" /><path stroke="#5fae6f" d="M12 2v20" /><path class="line" d="M12 12l7 8" /></svg></button>
            <button type="button" class="drop" aria-label="Isodraft menu"><svg><use href="#caret" /></svg></button>
          </div>
          <div class="set">
            <button type="button" aria-label="Object tracking"><svg viewBox="0 0 24 24"><path class="line" d="M3 20h19M3 20L18 4M11 14l3 3" /></svg></button>
            <button type="button" class="on" aria-label="Object snap"><svg viewBox="0 0 24 24"><path class="line" d="M8 4h14v18H4V8M2 2h6v6H2z" /></svg></button>
            <button type="button" class="drop" aria-label="Snap settings"><svg><use href="#caret" /></svg></button>
          </div>
          <div class="set">
            <button type="button" class="on" aria-label="Annotation visibility"><svg viewBox="0 0 24 24"><path fill="#fff" d="M10 2l3 11 6 9-7-4v-5h-3v5l-7 4 6-9z" /><circle class="line" cx="18" cy="6" r="4" /></svg></button>
            <button type="button" aria-label="Auto scale"><svg viewBox="0 0 24 24"><path class="solid" d="M10 3l3 10 6 9-7-4v-5h-3v5l-7 4 6-9zM20 1l-4 7h3l-2 5 5-7h-3z" /></svg></button>
            <button type="button" aria-label="Annotation scale"><svg viewBox="0 0 24 24"><path class="solid" d="M12 3l3 10 6 9-7-4v-5h-3v5l-7 4 6-9z" /></svg></button>
            <button type="button" class="text scale">1:1<svg><use href="#caret" /></svg></button>
          </div>
          <div class="set">
            <button type="button" aria-label="Workspace"><svg viewBox="0 0 24 24"><circle cx="12" cy="12" r="6" fill="none" stroke="#ddd" stroke-width="5" /><circle cx="12" cy="12" r="9" fill="none" stroke="#ddd" stroke-width="4" stroke-dasharray="4 3" /></svg></button>
            <button type="button" class="drop" aria-label="Workspace menu"><svg><use href="#caret" /></svg></button>
          </div>
          <div class="set"><button type="button" aria-label="Monitor"><svg viewBox="0 0 24 24"><path class="line" d="M12 3v18M3 12h18" stroke-width="3" /></svg></button></div>
          <div class="set"><button type="button" aria-label="Isolate objects"><svg viewBox="0 0 24 24"><path class="line" d="M3 3h7v7H3zM6 21h8l-4-7z" /><circle class="line" cx="18" cy="12" r="4" /></svg></button></div>
          <div class="set wide">
            <button type="button" aria-label="Hardware acceleration"><svg viewBox="0 0 24 24"><path fill="#2f77b5" d="M2 1h14l5 5v13H2z" /><path stroke="#dff" d="M8 2v11M2 7h13" /><path class="amber" d="M1 14h9v9H1z" /><path d="M11 17l4 5 8-10" fill="none" stroke="#4fc04f" stroke-width="3" /></svg></button>
            <button type="button" aria-label="Clean screen"><svg viewBox="0 0 24 24"><path fill="#d8d8d8" d="M2 2h20v18H2z" /><path fill="none" stroke="#3d5a78" d="M2 18l6-11 5 7 4-9 5 14" stroke-width="2" /><path fill="#f0a070" d="M17 10l5 13H12z" /></svg></button>
          </div>
          <div class="set">
            <button type="button" aria-label="Full screen"><svg viewBox="0 0 24 24"><path class="line" d="M2 4h20v16H2zM13 11l6-5M15 6h4v4M11 13l-6 5M5 14v4h4" /></svg></button>
            <button type="button" aria-label="Customization"><svg viewBox="0 0 24 24"><path class="line" d="M2 4h20M2 12h20M2 20h20" stroke-width="2" /></svg></button>
          </div>
        </div>
      </footer>
    </div>

    <div class="taskbar">
      <button type="button" aria-label="Windows start"><svg viewBox="0 0 24 24"><path fill="#fff" d="M2 5l8-1v7H2zM11 4l11-2v9H11zM2 12h8v8l-8-1zM11 12h11v10l-11-2z" /></svg></button>
      <button type="button" aria-label="Task view"><svg viewBox="0 0 24 24"><path class="line" d="M3 2v4h12V2M3 9h12v7H3zM3 22v-3h12v3M20 2v4M20 12v10" /><path fill="#fff" d="M18 8h4v3h-4z" /></svg></button>
      <button type="button" aria-label="Settings"><svg viewBox="0 0 24 24"><circle cx="12" cy="12" r="7" fill="none" stroke="#fff" stroke-width="3" /><circle cx="12" cy="12" r="10" fill="none" stroke="#fff" stroke-width="3" stroke-dasharray="4 4" /></svg></button>
      <button type="button" aria-label="Camera"><svg viewBox="0 0 30 30"><path fill="#7c8187" d="M0 7h8l3-4h9l3 4h7v20H0z" /><circle cx="15" cy="17" r="8" fill="#e8e8f4" /><circle cx="15" cy="17" r="6" fill="#6a6ce0" /><path fill="#49a7e8" d="M10 20a6 6 0 0 0 11-2z" /></svg></button>
      <button type="button" aria-label="Remote desktop"><svg viewBox="0 0 30 30"><path fill="#3fa3ea" d="M7 3l20 5v15L9 18z" /><path fill="#8fd0fa" d="M7 3l20 5-17 6z" /><path fill="#ddd" d="M9 20l12 3-5 3-15-3zM2 24l9 3-4 2-6-3z" /></svg></button>
      <button type="button" aria-label="Filmora"><svg viewBox="0 0 30 30"><rect width="30" height="30" rx="6" fill="#1d3644" /><path fill="#fff" d="M0 22h30c0 6-4 8-7 8H7c-4 0-7-3-7-8zM15 3l4 4-5 5-4-5z" /><path fill="#54d9c0" d="M16 10l4 4-7 7-1-6z" /><path d="M11 25l2 3 2-3 2 3 2-3" fill="none" stroke="#111" stroke-width="2" /></svg></button>
      <button type="button" aria-label="Outlook"><svg viewBox="0 0 30 30"><path fill="#3aa0e8" d="M9 1h19v17H9z" /><path fill="#1b6fc0" d="M9 10h10v18H9z" /><path fill="#57b8f5" d="M19 2h9v9h-9z" /><path fill="#1f86da" d="M10 28l18-11v11z" /><path fill="#0f62b5" d="M1 8h14v14H1z" /><circle cx="8" cy="15" r="4" fill="none" stroke="#fff" stroke-width="2" /></svg></button>
      <button type="button" aria-label="University"><svg viewBox="0 0 30 30"><path fill="#8a8a8a" d="M0 0h30v30H0z" /><path fill="#fff" d="M6 5h18v12c0 5-5 7-9 10-4-3-9-5-9-10z" /><path fill="#d7263d" d="M8 5h14v4H8z" /><path fill="#1f2b87" d="M7 11h16v6c0 4-4 6-8 9-4-3-8-5-8-9z" /><path stroke="#fff" stroke-width="2" d="M15 12v5M12 14h6M11 18v4M9 20h5M19 18v4M16 20h5" /></svg></button>
      <button type="button" aria-label="WeChat"><svg viewBox="0 0 30 30"><ellipse cx="11" cy="12" rx="11" ry="10" fill="#3fd07a" /><path fill="#3fd07a" d="M3 17l0 7 6-3z" /><ellipse cx="21" cy="19" rx="9" ry="8" fill="#eee" /><path fill="#eee" d="M24 24l4 4 0-6z" /><g fill="#2a3a2e"><circle cx="8" cy="9" r="1.500" /><circle cx="15" cy="9" r="1.500" /><circle cx="18" cy="17" r="1" /><circle cx="24" cy="17" r="1" /></g></svg></button>
      <button type="button" class="open" aria-label="File Explorer"><svg viewBox="0 0 30 30"><path fill="#f3b73e" d="M2 3h9l3 4h14v5H2z" /><path fill="#ffd977" d="M2 8h26v17H2z" /><path fill="#4aa3df" d="M6 27V15h18v12h-5v-6h-8v6z" /></svg></button>
      <button type="button" class="open" aria-label="Edge"><svg viewBox="0 0 30 30"><circle cx="15" cy="15" r="15" fill="#1a7fd0" /><path fill="#4fd07c" d="M15 0c9 0 15 6 15 13 0 5-4 7-8 7-3 0-4-1-3-3 2-6-4-9-9-8-4 0-8 2-10 5C1 6 7 0 15 0z" /><path fill="#38c2e0" d="M0 14C2 5 9 0 16 1c-6 3-8 6-8 8-4 0-7 2-8 5z" /><path fill="#0d4f96" d="M9 11c-5 8 1 17 10 17 4 0 7-2 9-5-6 2-16 0-14-10z" /></svg></button>
      <button type="button" class="open" aria-label="PowerPoint"><svg viewBox="0 0 30 30"><circle cx="17" cy="15" r="13" fill="#e8694a" /><path fill="#f7a287" d="M17 2a13 13 0 0 1 13 13H17z" /><path fill="#c23b20" d="M1 8h14v14H1z" /><path d="M6 19v-8h3a2 2 0 0 1 0 5H6" fill="none" stroke="#fff" stroke-width="2" /></svg></button>
      <button type="button" class="open current" aria-label="AutoCAD"><span class="cad"><b>A</b>CAD</span></button>

      <div class="tray">
        <button type="button" aria-label="Help"><svg class="tall" viewBox="0 0 28 28"><circle cx="13" cy="14" r="13" fill="#fff" /><circle cx="13" cy="14" r="11" fill="#1e8fcd" /><path d="M9 11c0-6 9-6 9-1 0 4-5 3-5 7M13 20v3" fill="none" stroke="#fff" stroke-width="3" /><circle cx="22" cy="21" r="6" fill="#f0a832" /><path stroke="#fff" stroke-width="2" d="M22 18v6" /></svg></button>
        <button type="button" aria-label="Stylus"><svg viewBox="0 0 24 24"><path fill="#eee" d="M2 4h20v17H2z" /><path fill="#30272e" d="M4 6h16v12h-5l-3-5-8 5z" /><path fill="#ccc" d="M9 14c2-6 7-7 9-7v4c-4-1-6 0-9 3z" /></svg></button>
        <button type="button" aria-label="Protection"><svg viewBox="0 0 24 24"><path fill="#ddd" d="M12 1l10 3v8c0 6-5 9-10 11C7 21 2 18 2 12V4z" /><path fill="#6fb02c" d="M12 3l8 3v6c0 5-4 7-8 9-4-2-8-4-8-9V6z" /><path fill="#fff" d="M14 5l-7 8h5l-2 6 7-8h-5z" /></svg></button>
        <button type="button" aria-label="Muted"><svg viewBox="0 0 24 24"><path class="line" d="M2 9h4l5-5v16l-5-5H2zM14 9l7 7M21 9l-7 7" /></svg></button>
        <button type="button" aria-label="Battery"><svg viewBox="0 0 24 24"><path fill="#fff" d="M8 8h13v10H6v-5h2zM22 10h1v5h-1z" /><path class="line" d="M5 17h17V7H9M4 4v4M7 4v4M2 8h7v3l-2 2H4l-2-2zM5 13v4" /></svg></button>
        <button type="button" aria-label="Sound"><svg viewBox="0 0 24 24"><path class="line" d="M2 3h12M2 8h8M2 13h7M12 12h3l5-5v15l-5-5h-3z" /></svg></button>
        <button type="button" aria-label="Security"><svg viewBox="0 0 24 24"><path fill="#fff" d="M12 1l9 3v8c0 5-4 8-9 10-5-2-9-5-9-10V4z" /><path stroke="#222" stroke-width="2" d="M12 2v19M3 11h18" /><circle cx="17" cy="17" r="6" fill="#1f9a5f" /><path d="M14 17l2 2 4-4" fill="none" stroke="#fff" stroke-width="2" /></svg></button>
        <button type="button" aria-label="Bluetooth"><svg viewBox="0 0 24 24"><ellipse cx="12" cy="12" rx="8" ry="11" fill="#1277dc" /><path d="M8 8l8 8-4 4V4l4 4-8 8" fill="none" stroke="#fff" stroke-width="1.500" /></svg></button>
        <button type="button" aria-label="Guard"><svg viewBox="0 0 24 24"><circle cx="12" cy="12" r="11" fill="#4fb53a" /><path fill="#f5e03a" d="M1 10c6-10 17-6 18-2s4 8 2 11c-5 7-14 4-16 0s-5-4-4-9z" /><path stroke="#2f8a2a" stroke-width="3" d="M12 7v10M7 12h10" /></svg></button>
        <button type="button" aria-label="Network"><svg viewBox="0 0 24 24"><path class="line" d="M4 20C4 10 10 4 20 4M8 21c0-8 5-13 12-13M12 21c0-5 3-8 8-8" stroke-opacity=".8" /><circle fill="#fff" cx="18" cy="19" r="2" /></svg></button>
        <button type="button" class="ime" lang="zh">英</button>
        <button type="button" class="clock"><time>2:04 <span lang="zh">周六</span></time><time>2023/5/13</time></button>
        <button type="button" class="far" aria-label="Media"><svg viewBox="0 0 24 24"><path class="line" d="M2 3h20v18H2z" stroke-width="2" /><path fill="#fff" d="M9 8l6 4-6 5z" /></svg></button>
        <button type="button" class="far" aria-label="Notifications"><svg viewBox="0 0 24 24"><path fill="#fff" d="M2 2h20v17h-7l-3 4-3-4H2z" /><path stroke="#0a410a" stroke-width="2" d="M5 6h14M5 10h14M5 14h9" /></svg></button>
      </div>
    </div>
  </body>
</html>
```

FILE: styles.css
```css
* {
  margin: 0;
  padding: 0;
  box-sizing: border-box;
}

body {
  display: flex;
  flex-direction: column;
  height: 100vh;
  overflow: hidden;
  font-family: "Noto Sans", "Noto Sans CJK SC", sans-serif;
  font-size: 15px;
  line-height: 20px;
  color: #e8eaec;
  background: linear-gradient(#b5461d 43px, #d9e2f0 43px);
}

a {
  color: inherit;
  text-decoration: none;
}

button,
input,
select {
  font: inherit;
  color: inherit;
  border: none;
  background: none;
  appearance: none;
  outline: none;
}

button {
  display: flex;
  align-items: center;
  justify-content: center;
  white-space: nowrap;
}

svg {
  display: block;
  flex: none;
  width: 24px;
  height: 24px;
}

.defs {
  position: absolute;
  width: 0;
  height: 0;
}

/* icon paint */
.solid {
  fill: #dcdddf;
}

.line {
  fill: none;
  stroke: #e2e3e5;
}

.blue {
  fill: none;
  stroke: #76bcf0;
}

.grip {
  fill: #7fc4f7;
}

.amber {
  fill: #ffcf70;
}

.pink {
  fill: #ee6a6a;
}

.fade {
  fill: #6d737c;
  stroke: #aeb2b8;
}

.drop {
  width: 14px;
}

.drop svg {
  width: 8px;
  height: 5px;
  fill: #dcdddf;
}

.drop.dim svg {
  fill: #8a8f95;
}

.window {
  flex: 1;
  display: flex;
  flex-direction: column;
  min-height: 0;
  margin: 0 2px 0 3px;
  padding: 4px 4px 3px 3px;
  border: 1px solid #1a7f99;
  border-top: none;
  background: linear-gradient(90deg, #2d86a8 42%, #2a6a35 42%, #2a6a35 45%, #dfe6ea 45%, #dfe6ea 58%, #2d86a8 58%) top / 100% 1px no-repeat,
    linear-gradient(#0d3142 4px, #222933 4px);
}

/* title bar */
.titlebar {
  display: flex;
  align-items: center;
  height: 28px;
}

.logo {
  display: flex;
  align-items: center;
  width: 50px;
  height: 23px;
  margin-right: 5px;
  background: linear-gradient(90deg, #e5164f 24px, #7c0f2f 24px);
}

.logo b {
  width: 26px;
  font-size: 17px;
  text-align: center;
}

.logo span {
  font-size: 9px;
  font-weight: bold;
}

.quick,
.account,
.win-buttons {
  display: flex;
  align-items: center;
}

.quick button,
.account button,
.win-buttons button {
  min-width: 30px;
  height: 28px;
}

.quick svg,
.account svg {
  width: 22px;
  height: 22px;
}

.quick .drop,
.account .drop {
  width: 15px;
  min-width: 0;
}

.quick .drop svg,
.account .drop svg {
  width: 7px;
  height: 5px;
}

.quick .custom {
  min-width: 24px;
}

.quick .custom svg {
  width: 12px;
  height: 12px;
}

.share {
  gap: 5px;
  color: #8fcdf7;
}

h1 {
  flex: 1;
  font-family: "Open Sans", sans-serif;
  font-size: 16px;
  font-weight: normal;
  text-align: center;
  white-space: pre;
}

.account .play {
  width: 5px;
  height: 10px;
  margin-right: 8px;
}

.account input {
  width: 223px;
  height: 26px;
  padding: 0 5px;
  font-size: 14px;
  font-style: italic;
  background: #434c5c;
}

.account input::placeholder {
  color: #c0c4ca;
  opacity: 1;
}

.user {
  gap: 6px;
  width: 130px;
  margin-left: 4px;
  font-size: 16px;
}

.account .user {
  justify-content: start;
}

.user + .drop {
  margin-right: 4px;
}

.rule {
  width: 1px;
  height: 22px;
  margin: 0 8px;
  background: #454c57;
}

.account .help {
  min-width: 22px;
  height: 22px;
  margin-right: 4px;
  border-radius: 50%;
  font-weight: bold;
  color: #333;
  background: #dcdddf;
}

.win-buttons {
  margin-left: 76px;
}

.win-buttons svg {
  width: 16px;
  height: 16px;
}

/* ribbon */
.ribbon-tabs {
  display: flex;
  gap: 1px;
  height: 32px;
  padding: 7px 3px 0;
  font-size: 16px;
  color: #b4b8bd;
}

.ribbon-tabs a {
  padding: 2px 12px 0;
}

.ribbon-tabs .active {
  color: #f2f3f4;
  background: #3b4453;
}

.collapse {
  margin-left: 26px;
}

.collapse svg {
  width: 20px;
  height: 10px;
}

.ribbon {
  display: flex;
  height: 124px;
  background: #3b4453;
}

.panel {
  position: relative;
  display: flex;
  flex-direction: column;
  min-width: 0;
  border-right: 2px solid #2a313c;
}

.panel:last-child {
  border-right: none;
}

.panel-body {
  flex: 1;
  display: grid;
  align-items: start;
  padding: 4px 2px 0;
}

.draw {
  flex: 288;
}

.draw .panel-body {
  grid-template-columns: 50px 62px 70px 51px 44px;
}

.modify {
  flex: 280;
}

.modify .panel-body {
  grid-template-columns: 97px 92px 50px 34px;
}

.annotation {
  flex: 194;
}

.annotation .panel-body {
  grid-template-columns: 60px 84px 44px;
}

.layers {
  flex: 348;
}

.layers .panel-body {
  grid-template-columns: 84px 1fr;
}

.insert {
  flex: 98;
}

.insert .panel-body {
  grid-template-columns: 50px 44px;
}

.properties {
  flex: 285;
}

.properties .panel-body {
  grid-template-columns: 86px 1fr;
}

.groups {
  flex: 89;
}

.groups .panel-body {
  grid-template-columns: 55px 30px;
}

.utilities {
  flex: 125;
}

.utilities .panel-body {
  grid-template-columns: 92px 30px;
}

.clipboard {
  flex: 115;
}

.clipboard .panel-body {
  grid-template-columns: 67px 44px;
}

.view {
  flex: 66;
}

.view .panel-body {
  padding-left: 14px;
}

.big {
  flex-direction: column;
  justify-content: start;
  padding-top: 3px;
  text-align: center;
}

.big svg {
  width: 40px;
  height: 40px;
  margin-bottom: 5px;
}

.big .mini {
  width: 8px;
  height: 5px;
  margin-top: 4px;
  fill: #dcdddf;
}

.stack {
  display: flex;
  flex-direction: column;
  min-width: 0;
}

.row {
  display: flex;
  align-items: center;
  justify-content: start;
  height: 31px;
}

.stack > button {
  gap: 6px;
  padding-left: 4px;
}

.stack > button svg,
.small svg {
  width: 22px;
  height: 22px;
}

.small {
  width: 30px;
  height: 28px;
}

.small.on {
  border: 1px solid #6fb2ea;
  background: #33587c;
}

.panel-title {
  gap: 7px;
  height: 24px;
}

.panel-title svg {
  width: 10px;
  height: 6px;
  fill: #e2e3e5;
}

.launcher {
  position: absolute;
  right: 4px;
  bottom: 8px;
}

.launcher svg {
  width: 8px;
  height: 8px;
}

.combo {
  flex: 1;
  display: flex;
  align-items: center;
  min-width: 0;
  height: 28px;
  padding: 0 1px 0 4px;
  border: 1px solid #2c3440;
  background: #4c586b;
}

.combo svg {
  width: 20px;
  height: 20px;
  margin-right: 4px;
}

.combo .caret {
  width: 10px;
  height: 6px;
  margin: 0;
  fill: #e2e3e5;
}

.combo select {
  flex: 1;
  width: 0;
  min-width: 0;
}

.swatch {
  width: 18px;
  height: 19px;
  margin: 0 6px 0 3px;
  background: #fff;
}

.sample {
  width: 80px;
  height: 1px;
  margin: 0 2px 0 3px;
  background: #eee;
}

.wheel {
  width: 20px;
  height: 20px;
  margin: 0 4px 0 2px;
  border-radius: 50%;
  background: conic-gradient(#f4c542, #ef7d31, #e8416b, #b04fd8, #4d7de8, #35b6c9, #56c465, #f4c542);
}

.row .weights {
  width: 20px;
  height: 20px;
  margin: 0 4px 0 2px;
}

/* drawing tabs */
.file-tabs {
  display: flex;
  align-items: center;
  height: 38px;
  padding: 2px 0 0 10px;
  border-bottom: 5px solid #3b4453;
}

.slash {
  flex: none;
  width: 2px;
  height: 20px;
  margin: 0 5px;
  background: #565d68;
  transform: skewX(-20deg);
}

.file-tabs a {
  padding: 0 9px;
}

.file-tabs .active {
  display: flex;
  align-items: center;
  gap: 8px;
  height: 31px;
  padding: 0 14px 0 20px;
  font-size: 16px;
  font-weight: bold;
  color: #fff;
  background: #3b4453;
  clip-path: polygon(12px 0, 100% 0, calc(100% - 11px) 100%, 0 100%);
}

.file-tabs svg {
  width: 10px;
  height: 10px;
}

.plus {
  width: 38px;
  height: 24px;
  background: linear-gradient(#dcdddf, #dcdddf) center / 16px 2px no-repeat,
    linear-gradient(#dcdddf, #dcdddf) center / 2px 16px no-repeat;
}

/* model space */
.model {
  position: relative;
  flex: 1;
  min-height: 0;
  background: #212830;
}

.drawing {
  width: 100%;
  height: 100%;
}

.view-label {
  position: absolute;
  left: 3px;
  top: 6px;
  font-size: 14px;
}

.view-buttons {
  position: absolute;
  top: 5px;
  right: 6px;
  display: flex;
}

.view-buttons button {
  width: 25px;
  height: 24px;
}

.view-buttons svg {
  width: 14px;
  height: 14px;
}

.compass {
  position: absolute;
  top: 53px;
  right: 24px;
  width: 128px;
  height: 128px;
  border: 16px solid #454b53;
  border-radius: 50%;
  font: bold 22px/24px "Liberation Sans", sans-serif;
  color: #bfc1c3;
}

.compass span {
  position: absolute;
  width: 24px;
  text-align: center;
}

.compass .n {
  top: -23px;
  left: 36px;
}

.compass .s {
  bottom: -25px;
  left: 36px;
}

.compass .w {
  top: 37px;
  left: -24px;
}

.compass .e {
  top: 37px;
  right: -24px;
}

.compass button {
  width: 56px;
  height: 56px;
  margin: 20px;
  border: 11px solid #b3b4b5;
  font: bold 13px "Open Sans", sans-serif;
  color: #4c535e;
  background: #a6adb8;
}

.wcs {
  position: absolute;
  top: 209px;
  right: 60px;
  gap: 8px;
  width: 56px;
  height: 21px;
  border-radius: 5px;
  font: 13px "Liberation Sans", sans-serif;
  color: #62656d;
  background: #9a9ca6;
}

.wcs svg {
  width: 9px;
  height: 6px;
}

.meter {
  position: absolute;
  top: 47px;
  right: -4px;
  width: 11px;
  height: 75px;
  border: 1px solid #a9acb0;
  border-radius: 5px;
  background: linear-gradient(#15181c 54%, #1fa54a 54%, #5af07a);
}

.navbar {
  position: absolute;
  top: 261px;
  right: 3px;
  border-radius: 3px;
  background: #595e65;
}

.navbar svg {
  width: 40px;
  height: 259px;
  fill: none;
  stroke: #41464d;
}

.navbar .tip {
  fill: #353a40;
}

.command {
  position: absolute;
  left: 20%;
  right: calc(20% + 5px);
  bottom: 0;
  display: flex;
  align-items: center;
  height: 32px;
  padding-left: 7px;
}

.grip-dots {
  width: 6px;
  height: 20px;
  background: radial-gradient(#c5c8cc 1px, transparent 1px) 0 0 / 3px 3px;
}

.command button {
  width: 28px;
}

.command button svg {
  width: 11px;
  height: 11px;
}

.command .wrench {
  width: 36px;
}

.command .wrench svg {
  width: 20px;
  height: 20px;
}

.command-box {
  flex: 1;
  display: flex;
  align-items: center;
  gap: 2px;
  height: 32px;
  padding: 0 6px 0 5px;
  border-radius: 2px;
  background: #bdbec0;
}

.command-box svg {
  width: 20px;
  height: 16px;
}

.command-box .caret {
  width: 10px;
  height: 6px;
  fill: #44484d;
}

.command-box .up {
  transform: rotate(180deg);
}

.command-box input {
  flex: 1;
  padding-left: 6px;
  font: italic 15px "Liberation Mono", monospace;
  color: #333;
}

.command-box input::placeholder {
  color: #4d4f52;
  opacity: 1;
}

/* status bar */
.statusbar {
  display: flex;
  justify-content: space-between;
  height: 42px;
  border-top: 6px solid #3b4453;
}

.layout-tabs {
  display: flex;
  align-items: center;
  height: 30px;
  padding-left: 10px;
  font-size: 16px;
}

.layout-tabs a {
  padding: 0 9px;
}

.layout-tabs .active {
  height: 30px;
  padding: 5px 20px;
  font-size: 15px;
  font-weight: bold;
  color: #fff;
  background: #3b4453;
  clip-path: polygon(11px 0, 100% 0, calc(100% - 11px) 100%, 0 100%);
}

.status {
  display: flex;
  align-items: center;
  gap: 3px;
  height: 30px;
  padding-top: 1px;
}

.set {
  display: flex;
  align-items: center;
  height: 29px;
  background: #3b4453;
}

.set button {
  width: 30px;
  height: 29px;
}

.set svg {
  width: 22px;
  height: 22px;
}

.set .on {
  background: #5b8cc2;
}

.set .drop {
  width: 19px;
}

.set .drop svg,
.set .scale svg {
  width: 10px;
  height: 6px;
  fill: #dcdddf;
}

.set .text {
  width: auto;
  gap: 4px;
  padding: 0 4px;
}

.set.wide {
  gap: 4px;
  padding: 0 2px;
}

/* taskbar */
.taskbar {
  display: flex;
  height: 50px;
  border-top: 1px solid #2a7a80;
  background: #0a410a;
}

.taskbar > button {
  width: 62px;
  border-bottom: 3px solid transparent;
}

.taskbar > button:first-child {
  width: 60px;
}

.taskbar > button svg {
  width: 30px;
  height: 30px;
}

.taskbar > button:nth-child(-n + 3) svg {
  width: 24px;
  height: 24px;
}

.taskbar .open {
  width: 52px;
  margin: 0 5px;
  border-bottom-color: #84c184;
}

.taskbar .current {
  width: 60px;
  margin: 0 1px;
  background: #12600f;
}

.cad {
  display: flex;
  flex-direction: column;
  align-items: center;
  width: 26px;
  height: 30px;
  border-radius: 2px;
  font-size: 8px;
  line-height: 9px;
  font-weight: bold;
  background: linear-gradient(#e5164f 20px, #7c0f2f 20px);
}

.cad b {
  font-size: 16px;
  line-height: 20px;
}

.tray {
  display: flex;
  align-items: center;
  margin: 0 16px 0 auto;
}

.tray button {
  width: 30px;
  height: 48px;
}

.tray svg {
  width: 21px;
  height: 21px;
}

.tray .tall {
  width: 28px;
  height: 28px;
}

.tray .ime {
  margin-right: 4px;
  font-size: 20px;
}

.tray .clock {
  flex-direction: column;
  width: 90px;
}

.tray .far {
  width: 50px;
}
```
